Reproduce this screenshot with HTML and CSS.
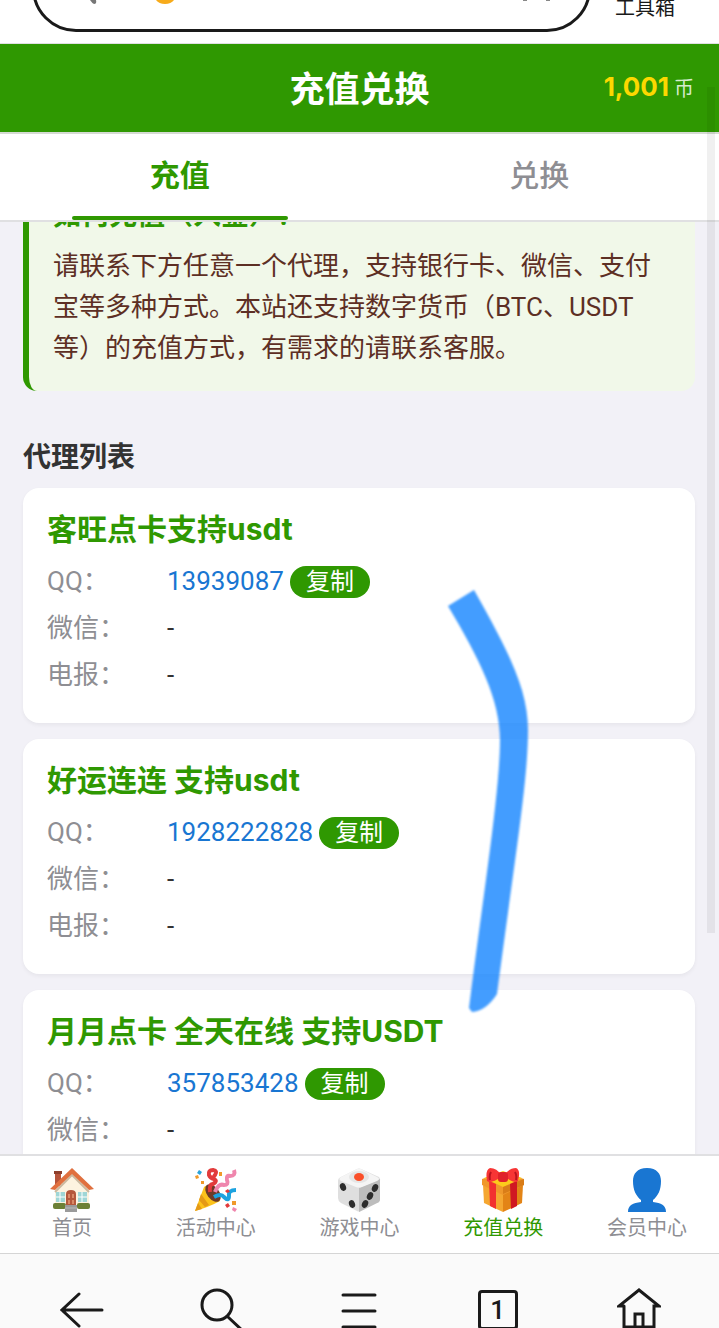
FILE: index.html
```html
<!DOCTYPE html>
<html lang="zh-CN">
<head>
  <meta charset="UTF-8">
  <title>充值兑换</title>
  <meta name="viewport" content="width=device-width, initial-scale=1">
  <link rel="stylesheet" href="styles.css">
</head>
<body>

<div class="address-bar">
  <div class="address-box">
    <svg class="address-back" width="20" height="4" viewBox="0 0 20 4"><path d="M11 0h6q1 4-2 4-2-1-4-4z" fill="#777"/></svg>
    <svg class="address-shield" width="20" height="4" viewBox="0 0 20 4"><path d="M1 0h18q-3 4-9 4t-9-4z" fill="#f7ab1b"/></svg>
    <svg class="address-scan" width="30" height="4" viewBox="0 0 30 4"><path d="M1 0h4M24 0h4" stroke="#888" stroke-width="2"/></svg>
  </div>
  <a href="#" class="toolbox">工具箱</a>
</div>

<header class="header">
  <h1>充值兑换</h1>
  <div class="balance"><strong>1,001</strong> 币</div>
</header>

<div class="tabs">
  <button class="tab active">充值</button>
  <button class="tab">兑换</button>
</div>

<main class="content">
  <section class="guide">
    <h2>如何充值（入金）?</h2>
    <p>请联系下方任意一个代理，支持银行卡、微信、支付宝等多种方式。本站还支持数字货币（BTC、USDT等）的充值方式，有需求的请联系客服。</p>
  </section>

  <h2 class="list-title">代理列表</h2>

  <section class="agent">
    <h3>客旺点卡支持usdt</h3>
    <dl>
      <dt>QQ：</dt>
      <dd><a href="#">13939087</a><button class="copy">复制</button></dd>
      <dt>微信：</dt>
      <dd>-</dd>
      <dt>电报：</dt>
      <dd>-</dd>
    </dl>
  </section>

  <section class="agent">
    <h3>好运连连 支持usdt</h3>
    <dl>
      <dt>QQ：</dt>
      <dd><a href="#">1928222828</a><button class="copy">复制</button></dd>
      <dt>微信：</dt>
      <dd>-</dd>
      <dt>电报：</dt>
      <dd>-</dd>
    </dl>
  </section>

  <section class="agent">
    <h3>月月点卡 全天在线 支持USDT</h3>
    <dl>
      <dt>QQ：</dt>
      <dd><a href="#">357853428</a><button class="copy">复制</button></dd>
      <dt>微信：</dt>
      <dd>-</dd>
    </dl>
  </section>
</main>

<nav class="nav">
  <a href="#">
    <svg viewBox="0 0 44 44">
      <path d="M5 4h6v14H5z" fill="#b5533a"/>
      <path d="M4 3h8v3H4z" fill="#8d3f2c"/>
      <path d="M5 22 22 5l17 17v18H5z" fill="#fdf3e0"/>
      <path d="M5 24 22 7l17 17" fill="none" stroke="#cbb9a0" stroke-width="2"/>
      <path d="M22 0 44 21l-5 1L22 6 5 22l-5-1z" fill="#e0703f"/>
      <path d="M6 24h9v10H6zM28 24h9v10h-9z" fill="#9fd6d6"/>
      <path d="M10 24v10M6 29h9M32 24v10M28 29h9" stroke="#fff" stroke-width="1"/>
      <path d="M16 38V26q0-4 5-4t5 4v12z" fill="#b5583c"/>
      <path d="M18 26h2v4h-2zM22 26h2v4h-2zM18 32h2v4h-2zM22 32h2v4h-2z" fill="#d98a68"/>
      <rect x="3" y="35" width="13" height="6" rx="2" fill="#6c8036"/>
      <rect x="27" y="35" width="13" height="6" rx="2" fill="#6c8036"/>
      <path d="M15 37h12v7H15z" fill="#9b9b9b"/>
      <path d="M15 40h12" stroke="#bbb" stroke-width="1"/>
    </svg>
    <span>首页</span>
  </a>
  <a href="#">
    <svg viewBox="0 0 44 44">
      <path d="M1 43 10 19q3-4 10 2t6 12Q15 39 1 43z" fill="#fcc21b"/>
      <path d="m7 26 8 11-4 2-6-7zM1 43l3-8 4 6z" fill="#e59a17"/>
      <ellipse cx="19" cy="25" rx="6" ry="10" transform="rotate(-38 19 25)" fill="#6d3a28"/>
      <path d="M16 24q-1-8 3-8 5-3 1-5-4-1-5-4-1-5 4-5 5 1 2 5l-2 3" fill="none" stroke="#e23b3b" stroke-width="4"/>
      <path d="M21 24q3-9 9-7 5 0 3-5-1-5 3-4 6 0 4-6" fill="none" stroke="#ef86ad" stroke-width="4"/>
      <path d="M20 29q7-4 10 0 5 5 5-1-1-6 7-6" fill="none" stroke="#1ca3e0" stroke-width="4"/>
      <path d="m5 2 3 2-2 3-3-2z" fill="#29a3d8"/>
      <path d="m39 39 4 2-2 3-3-2z" fill="#ef86ad"/>
      <path d="m1 8 3-1 1 3-3 1zM25 4h3v4h-3zM38 33h4v4h-4zM7 13h3v3H7z" fill="#f09a2a"/>
      <path d="m31 23 3-2 2 3-3 1zM31 37l3-2 2 3-3 2z" fill="#e23b3b"/>
    </svg>
    <span>活动中心</span>
  </a>
  <a href="#">
    <svg viewBox="0 0 44 44">
      <path d="M20 1q2-1 4 0l18 8q2 2 1 5v17q0 3-3 4L24 43q-2 1-4 0L4 35q-3-2-3-5V13q0-3 3-4z" fill="#dfdfdf"/>
      <path d="M22 20 43 11v20q0 3-3 4L22 44z" fill="#bdbdbd"/>
      <path d="M20 1q2-1 4 0l16 8q4 2 0 4L25 19q-3 1-6 0L4 13q-3-2 0-4z" fill="#f5f5f5"/>
      <ellipse cx="22" cy="9" rx="10" ry="6" fill="#e5e5e5"/>
      <ellipse cx="22" cy="9" rx="5" ry="4" fill="#fa4f29"/>
      <g fill="#2d2d2d">
        <ellipse cx="6" cy="19" rx="3" ry="4" transform="rotate(-20 6 19)"/>
        <ellipse cx="15" cy="36" rx="3" ry="4" transform="rotate(-20 15 36)"/>
        <ellipse cx="38" cy="20" rx="3" ry="4" transform="rotate(25 38 20)"/>
        <ellipse cx="33" cy="28" rx="3" ry="4" transform="rotate(25 33 28)"/>
        <ellipse cx="28" cy="36" rx="3" ry="4" transform="rotate(25 28 36)"/>
      </g>
    </svg>
    <span>游戏中心</span>
  </a>
  <a href="#" class="active">
    <svg viewBox="0 0 44 44">
      <path d="m2 17 20 8v19L3 35z" fill="#f5a731"/>
      <path d="m42 17-20 8v19l19-9z" fill="#e38416"/>
      <path d="M1 11 22 4l21 7v6l-21 10L1 17z" fill="#f0982b"/>
      <path d="m3 10 19-7 19 7-19 9z" fill="#fccb1c"/>
      <path d="M22 19 43 11v6l-21 9z" fill="#d97d18"/>
      <path d="m8 13 7 3v25l-6-3z" fill="#f23030"/>
      <path d="m29 16 7-3v25l-6 3z" fill="#d01822"/>
      <path d="M20 9Q10 16 6 13 4 2 9 0q7 0 11 7zM24 9q10 7 13 4 3-11-2-13-7 0-11 7z" fill="#f73535"/>
      <path d="M10 4q-2 3-1 8M34 4q2 3 1 8" stroke="#b9131e" stroke-width="2" fill="none"/>
      <rect x="17" y="4" width="10" height="10" rx="3" fill="#e02229"/>
    </svg>
    <span>充值兑换</span>
  </a>
  <a href="#">
    <svg viewBox="0 0 44 44">
      <path d="M22 0c10 0 14 6 14 13 0 9-3 15-8 19v2c8 1 13 3 13 10H3c0-7 5-9 13-10v-2C11 28 8 22 8 13 8 6 12 0 22 0z" fill="#1976d2"/>
    </svg>
    <span>会员中心</span>
  </a>
</nav>

<div class="browser-bar">
  <button aria-label="后退"><svg viewBox="0 0 44 48"><path d="M19 8 2 24l17 16M2 24h40"/></svg></button>
  <button aria-label="搜索"><svg viewBox="0 0 44 48"><circle cx="18" cy="19" r="15"/><path d="m29 31 16 15"/></svg></button>
  <button aria-label="菜单"><svg viewBox="0 0 44 48"><path d="M4 9h32M4 25h32M4 41h32"/></svg></button>
  <button class="pages" aria-label="窗口"><span>1</span></button>
  <button aria-label="主页"><svg viewBox="0 0 44 48"><path d="M7 20H2L22 4l20 16h-5v21H7V20M18 41V28h8v13"/></svg></button>
</div>

<div class="scrollbar"></div>

<svg class="marker" width="100" height="440" viewBox="0 0 100 440">
  <path d="M8 26 34 10C70 74 88 110 88 150C88 200 76 270 57 414Q46 431 32 432L29 428C44 310 60 210 60 160C60 120 40 80 8 26z"/>
</svg>

</body>
</html>
```

FILE: styles.css
```css
:root {
  --green: #2f9801;
  --gray: #8e8e93;
  --bg: #f2f1f7;
  --line: #e0e0e2;
}

* {
  box-sizing: border-box;
}

body {
  display: flex;
  flex-direction: column;
  height: 100vh;
  margin: 0;
  overflow: hidden;
  background-color: var(--bg);
  color: #333;
  font-family: Roboto, "Noto Sans CJK SC", sans-serif;
  font-size: 26px;
}

h1, h2, h3, p, dl, dd {
  margin: 0;
}

a {
  text-decoration: none;
}

button {
  padding: 0;
  border: none;
  background: none;
  font-family: inherit;
  cursor: pointer;
}

.address-bar {
  display: flex;
  flex-shrink: 0;
  align-items: flex-end;
  height: 44px;
  padding: 0 44px 11px 32px;
  border-bottom: 1px solid var(--line);
  background-color: white;
  overflow: hidden;
}

.address-box {
  display: flex;
  flex: 1;
  height: 88px;
  padding: 53px 36px 0 44px;
  border: 3px solid #1a1a1a;
  border-radius: 44px;
}

.address-shield {
  margin-left: 56px;
}

.address-scan {
  margin-left: auto;
}

.toolbox {
  margin: 0 0 12px 24px;
  color: #1a1a1a;
  font-size: 20px;
  line-height: 24px;
}

.header {
  display: flex;
  flex-shrink: 0;
  align-items: center;
  justify-content: center;
  position: relative;
  height: 90px;
  padding-bottom: 4px;
  border-bottom: 2px solid #d5dad3;
  background-color: var(--green);
  color: white;
}

.header h1 {
  font-size: 35px;
  font-weight: 700;
}

.balance {
  position: absolute;
  right: 25px;
  color: #d5ebcc;
  font-size: 20px;
}

.balance strong {
  color: #fcd800;
  font-family: Inter, sans-serif;
  font-size: 26px;
}

.tabs {
  display: flex;
  flex-shrink: 0;
  height: 88px;
  border-bottom: 2px solid var(--line);
  background-color: white;
}

.tab {
  flex: 1;
  position: relative;
  padding-bottom: 8px;
  color: var(--gray);
  font-size: 30px;
  font-weight: 500;
}

.tab.active {
  color: var(--green);
  font-weight: 700;
}

.tab.active::after {
  content: "";
  position: absolute;
  right: 20%;
  bottom: 0;
  left: 20%;
  height: 4px;
  border-radius: 2px;
  background-color: var(--green);
}

/* list is scrolled down a little, the guide title is half hidden */
.content {
  flex: 1;
  min-height: 0;
  padding: 0 24px 0 23px;
  overflow: hidden;
}

.guide {
  margin: -48px 0 43px;
  padding: 24px 24px 22px;
  border-left: 6px solid var(--green);
  border-radius: 14px;
  background-color: #f1f8e9;
}

.guide h2 {
  margin-bottom: 12px;
  color: var(--green);
  font-size: 28px;
  line-height: 36px;
}

.guide p {
  color: #5d2f24;
  line-height: 41px;
}

.list-title {
  margin-bottom: 6px;
  font-size: 28px;
  line-height: 48px;
}

.agent {
  height: 235px;
  margin-bottom: 16px;
  padding: 20px 24px;
  border-radius: 16px;
  background-color: white;
  box-shadow: 0 2px 4px rgba(0, 0, 0, 0.05);
}

.agent h3 {
  margin-bottom: 8px;
  color: var(--green);
  font-family: Inter, "Noto Sans CJK SC", sans-serif;
  font-size: 30px;
  line-height: 42px;
}

.agent dl {
  display: grid;
  grid-template-columns: 120px 1fr;
  grid-auto-rows: 47px;
  line-height: 47px;
}

.agent dt {
  color: var(--gray);
}

.agent dd {
  display: flex;
  align-items: center;
  gap: 6px;
}

.agent a {
  color: #1976d2;
}

.copy {
  height: 32px;
  padding: 0 16px;
  border-radius: 16px;
  background-color: var(--green);
  color: white;
  font-size: 24px;
  line-height: 32px;
}

.nav {
  display: flex;
  flex-shrink: 0;
  height: 100px;
  border-top: 2px solid var(--line);
  border-bottom: 1px solid #d5d5d5;
  background-color: white;
}

.nav a {
  display: flex;
  flex: 1;
  flex-direction: column;
  align-items: center;
  padding-top: 12px;
  color: var(--gray);
  font-size: 20px;
  line-height: 32px;
}

.nav a.active {
  color: var(--green);
}

.nav svg {
  width: 44px;
  height: 44px;
}

.browser-bar {
  display: flex;
  flex-shrink: 0;
  align-items: flex-start;
  justify-content: space-between;
  height: 74px;
  padding: 32px 58px 0 60px;
  background-color: #fafafa;
  overflow: hidden;
}

.browser-bar svg {
  display: block;
  width: 44px;
  height: 48px;
  fill: none;
  stroke: #1a1a1a;
  stroke-width: 3;
  stroke-linecap: round;
}

.pages {
  width: 40px;
  height: 40px;
  margin: 4px 4px 0 0;
  border: 3px solid #1a1a1a;
  border-radius: 4px;
  color: #1a1a1a;
  font-size: 26px;
  font-weight: 500;
  line-height: 34px;
}

.scrollbar {
  position: absolute;
  top: 87px;
  right: 4px;
  width: 8px;
  height: 846px;
  background-color: rgba(0, 0, 0, 0.06);
}

/* pen stroke over the cards */
.marker {
  position: absolute;
  top: 580px;
  left: 440px;
  fill: #1a88ff;
  opacity: 0.82;
  filter: blur(1px);
  pointer-events: none;
}
```
